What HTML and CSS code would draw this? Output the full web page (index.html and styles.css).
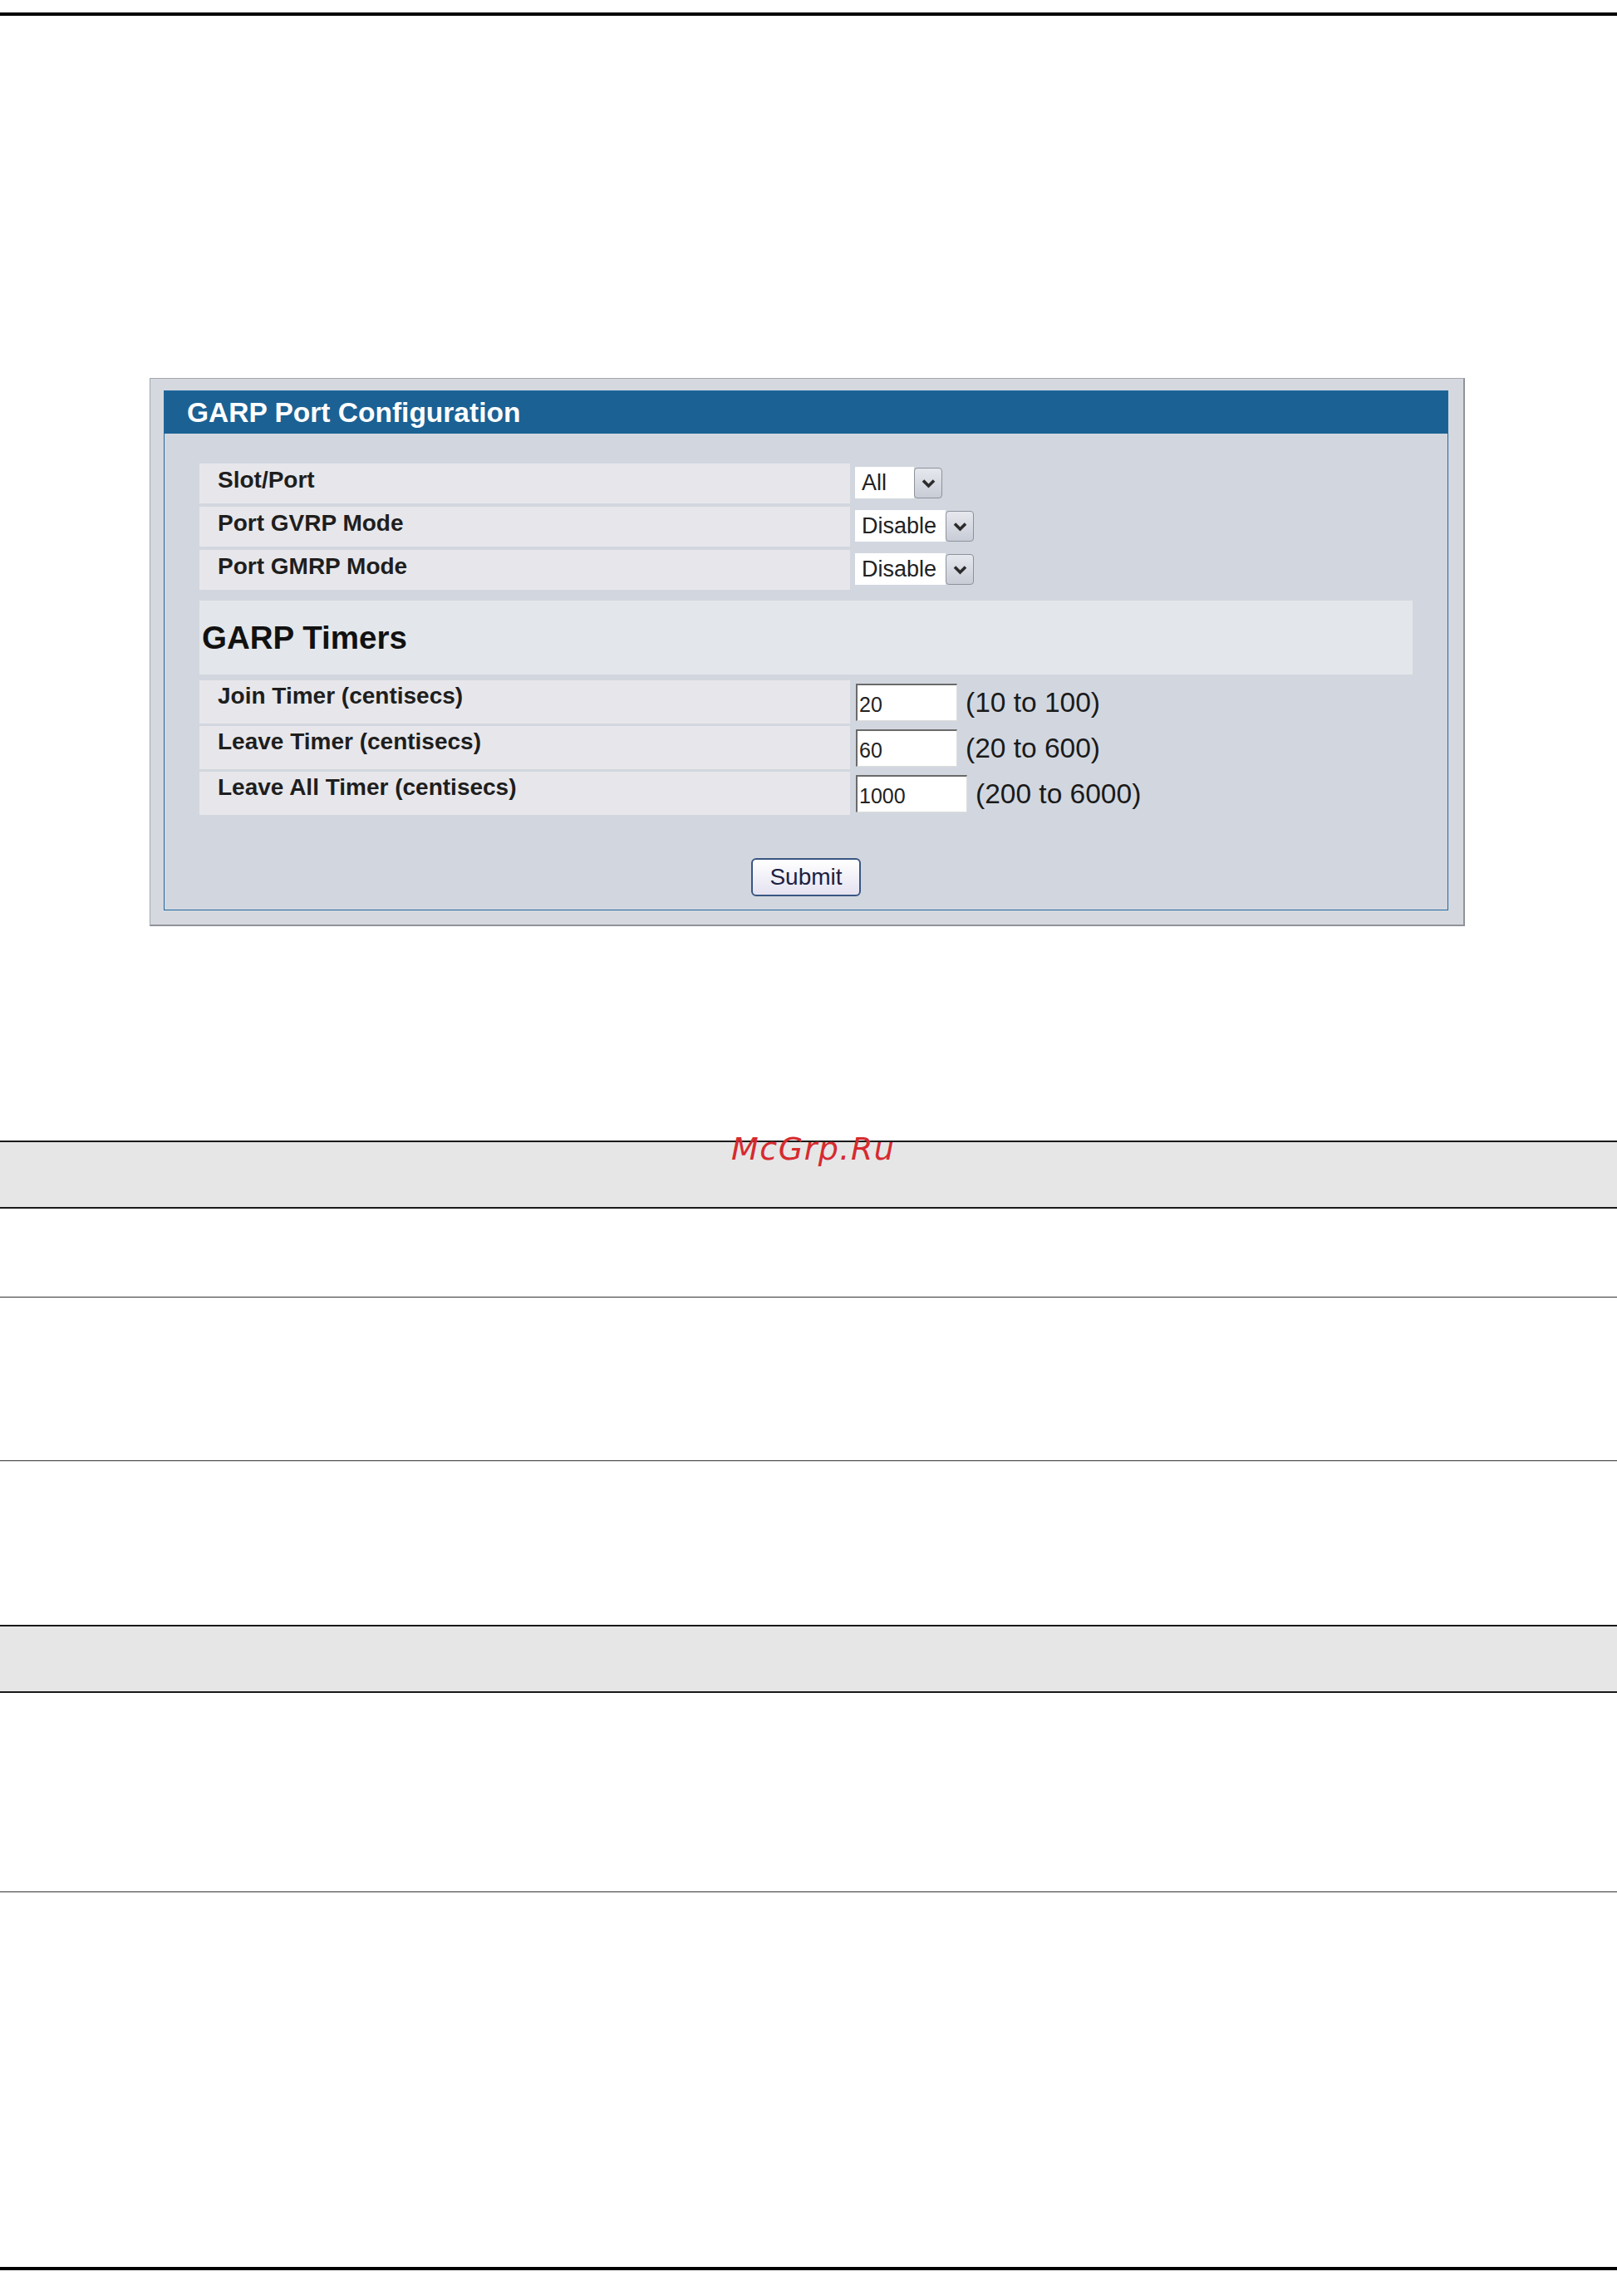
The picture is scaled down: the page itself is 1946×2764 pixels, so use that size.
FILE: index.html
```html
<!DOCTYPE html>
<html lang="en">
<head>
  <meta charset="UTF-8">
  <title>GARP Port Configuration</title>
  <link rel="stylesheet" href="styles.css">
</head>
<body>
  <div class="rule-top"></div>

  <div class="panel">
    <div class="frame">
      <div class="frame-head">GARP Port Configuration</div>
      <div class="frame-body">
        <div class="cfg-rows">
          <div class="cfg-row">
            <div class="cfg-label">Slot/Port</div>
            <div class="cfg-value">
              <div class="dropdown">
                <span class="dropdown-text dd-short">All</span>
                <span class="dropdown-arrow"><svg width="17" height="12" viewBox="0 0 17 12"><path d="M2 2.5 L8.5 9 L15 2.5" fill="none" stroke="#2b2b2b" stroke-width="3.6"/></svg></span>
              </div>
            </div>
          </div>
          <div class="cfg-row">
            <div class="cfg-label">Port GVRP Mode</div>
            <div class="cfg-value">
              <div class="dropdown">
                <span class="dropdown-text dd-wide">Disable</span>
                <span class="dropdown-arrow"><svg width="17" height="12" viewBox="0 0 17 12"><path d="M2 2.5 L8.5 9 L15 2.5" fill="none" stroke="#2b2b2b" stroke-width="3.6"/></svg></span>
              </div>
            </div>
          </div>
          <div class="cfg-row">
            <div class="cfg-label">Port GMRP Mode</div>
            <div class="cfg-value">
              <div class="dropdown">
                <span class="dropdown-text dd-wide">Disable</span>
                <span class="dropdown-arrow"><svg width="17" height="12" viewBox="0 0 17 12"><path d="M2 2.5 L8.5 9 L15 2.5" fill="none" stroke="#2b2b2b" stroke-width="3.6"/></svg></span>
              </div>
            </div>
          </div>
        </div>

        <div class="section-title">GARP Timers</div>

        <div class="timer-rows">
          <div class="timer-row">
            <div class="cfg-label">Join Timer (centisecs)</div>
            <div class="timer-value">
              <input class="timer-input" type="text" value="20">
              <span class="range">(10 to 100)</span>
            </div>
          </div>
          <div class="timer-row">
            <div class="cfg-label">Leave Timer (centisecs)</div>
            <div class="timer-value">
              <input class="timer-input" type="text" value="60">
              <span class="range">(20 to 600)</span>
            </div>
          </div>
          <div class="timer-row">
            <div class="cfg-label">Leave All Timer (centisecs)</div>
            <div class="timer-value">
              <input class="timer-input wide" type="text" value="1000">
              <span class="range">(200 to 6000)</span>
            </div>
          </div>
        </div>

        <div class="actions">
          <button type="button" class="submit-btn">Submit</button>
        </div>
      </div>
    </div>
  </div>

  <div class="doc-table">
    <div class="watermark">McGrp.Ru</div>
    <div class="doc-band"></div>
    <div class="doc-row r1"></div>
    <div class="doc-row r2"></div>
    <div class="doc-row r3 last"></div>
    <div class="doc-band"></div>
    <div class="doc-row r4"></div>
  </div>

  <div class="rule-bottom"></div>
</body>
</html>
```

FILE: styles.css
```css
body {
  margin: 0;
  background-color: #ffffff;
  font-family: "Liberation Sans", Arial, sans-serif;
  color: #222;
}
.rule-top {
  height: 4px;
  margin-top: 15px;
  background-color: #000;
}
.panel {
  box-sizing: border-box;
  width: 1583px;
  margin: 436px 0 0 180px;
  padding: 14px 18px 17px 16px;
  background-color: #d5d9df;
  border: 1px solid #a3a7ad;
  border-right: 2px solid #8f9398;
  border-bottom: 2px solid #8f9398;
}
.frame {
  background-color: #d2d7df;
  border: 1px solid #1f68a0;
}
.frame-head {
  height: 51px;
  line-height: 51px;
  padding-left: 27px;
  background-color: #1b6194;
  color: #ffffff;
  font-size: 33.5px;
  font-weight: bold;
}
.frame-body {
  padding: 36px 42px 16px 42px;
}
.cfg-rows {
  display: flex;
  flex-direction: column;
  gap: 4px;
}
.cfg-row {
  display: grid;
  grid-template-columns: 783px 1fr;
  height: 48px;
}
.cfg-label {
  background-color: #e7e7eb;
  padding: 4px 0 0 22px;
  font-size: 28px;
  font-weight: bold;
  color: #1e1e1e;
}
.cfg-value {
  padding: 4px 0 0 6px;
}
.dropdown {
  display: inline-flex;
  height: 38px;
}
.dropdown-text {
  box-sizing: border-box;
  background-color: #ffffff;
  padding-left: 8px;
  font-size: 27px;
  line-height: 38px;
  color: #222;
}
.dd-short {
  width: 71px;
}
.dd-wide {
  width: 109px;
}
.dropdown-arrow {
  box-sizing: border-box;
  width: 34px;
  height: 37px;
  margin-top: 1px;
  display: flex;
  align-items: center;
  justify-content: center;
  background: linear-gradient(#e6e8ee, #c8ccd6);
  border: 1px solid #8d929a;
  border-radius: 4px;
}
.section-title {
  display: flex;
  align-items: center;
  height: 89px;
  margin-top: 13px;
  padding-left: 3px;
  background-color: #e3e7eb;
  font-size: 38.5px;
  font-weight: bold;
  color: #111;
}
.timer-rows {
  display: flex;
  flex-direction: column;
  gap: 3px;
  margin-top: 7px;
}
.timer-row {
  display: grid;
  grid-template-columns: 783px 1fr;
  height: 52px;
}
.timer-row .cfg-label {
  padding-top: 3px;
}
.timer-value {
  display: flex;
  align-items: center;
  height: 45px;
  padding: 4px 0 0 7px;
}
.timer-input {
  box-sizing: border-box;
  width: 122px;
  height: 45px;
  margin: 0;
  padding: 4px 0 0 2px;
  border-top: 2px solid #6a6a6a;
  border-left: 2px solid #6a6a6a;
  border-right: 1px solid #dcdcdc;
  border-bottom: 1px solid #dcdcdc;
  background-color: #ffffff;
  font-family: "Liberation Sans", Arial, sans-serif;
  font-size: 25px;
  color: #222;
  outline: none;
}
.timer-input.wide {
  width: 134px;
}
.range {
  margin-left: 10px;
  font-size: 33.5px;
  color: #1a1a1a;
}
.actions {
  display: flex;
  justify-content: center;
  margin-top: 52px;
}
.submit-btn {
  box-sizing: border-box;
  width: 132px;
  height: 46px;
  margin: 0;
  padding: 0;
  border: 2px solid #3a5682;
  border-radius: 6px;
  background: linear-gradient(#ffffff, #e4e2f0);
  font-family: "Liberation Sans", Arial, sans-serif;
  font-size: 28px;
  color: #1c2142;
}
.doc-table {
  position: relative;
  margin-top: 258px;
}
.watermark {
  position: absolute;
  left: 880px;
  top: -9px;
  font-family: "DejaVu Sans", sans-serif;
  font-style: italic;
  font-size: 38px;
  line-height: 38px;
  letter-spacing: 1.5px;
  color: #d62a2f;
}
.doc-band {
  height: 78px;
  background-color: #e6e6e6;
  border-top: 2px solid #1a1a1a;
  border-bottom: 2px solid #1a1a1a;
}
.doc-row {
  border-bottom: 1px solid #333;
}
.doc-row.last {
  border-bottom: none;
}
.r1 {
  height: 106px;
}
.r2 {
  height: 196px;
}
.r3 {
  height: 197px;
}
.r4 {
  height: 239px;
}
.rule-bottom {
  height: 4px;
  margin-top: 451px;
  background-color: #000;
}
```
